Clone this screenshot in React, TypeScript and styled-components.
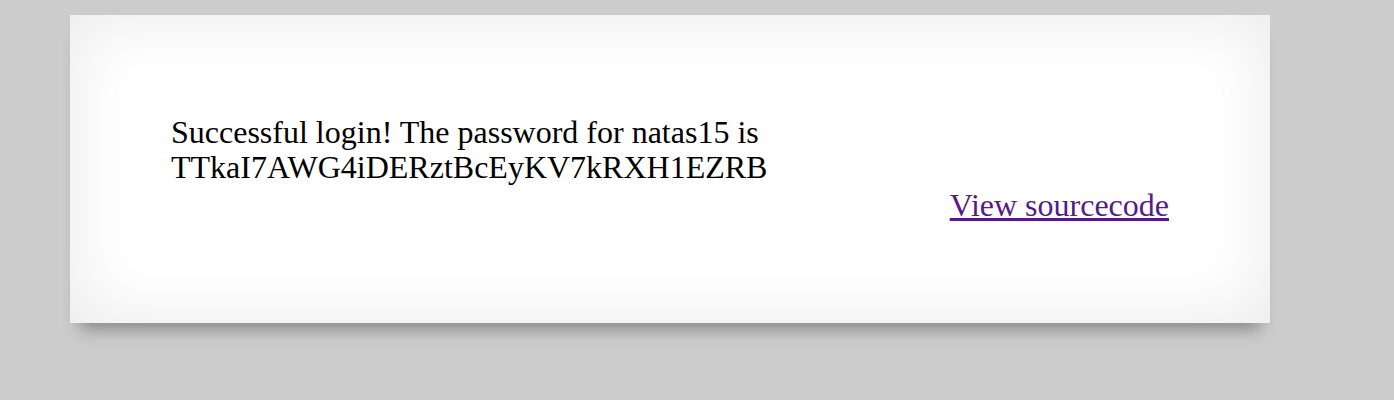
import React from "react";
import styled, { createGlobalStyle } from "styled-components";

const Global = createGlobalStyle`
  html, body {
    margin: 0;
    padding: 0;
    background: #cccccc;
  }
  body {
    font-family: "Liberation Serif", "Times New Roman", serif;
  }
`;

const Page = styled.div`
  min-height: 400px;
  box-sizing: border-box;
  padding: 15px 0 0 70px;
`;

const Card = styled.div`
  width: 1200px;
  height: 308px;
  box-sizing: border-box;
  background: #ffffff;
  padding: 100px 101px 0 101px;
  box-shadow: inset 0 0 70px rgba(0, 0, 0, 0.09),
    0 16px 16px -10px rgba(0, 0, 0, 0.35);
  display: flex;
  flex-direction: column;
`;

const Message = styled.div`
  font-size: 32px;
  line-height: 35px;
  color: #000;
`;

const SourceRow = styled.div`
  display: flex;
  justify-content: flex-end;
  margin-top: 3px;
`;

const SourceLink = styled.a`
  font-size: 32px;
  line-height: 35px;
  color: #551a8b;
  text-decoration: underline;
`;

export default function App() {
  return (
    <Page>
      <Global />
      <Card>
        <Message>
          Successful login! The password for natas15 is
          <br />
          TTkaI7AWG4iDERztBcEyKV7kRXH1EZRB
        </Message>
        <SourceRow>
          <SourceLink href="#">View sourcecode</SourceLink>
        </SourceRow>
      </Card>
    </Page>
  );
}
